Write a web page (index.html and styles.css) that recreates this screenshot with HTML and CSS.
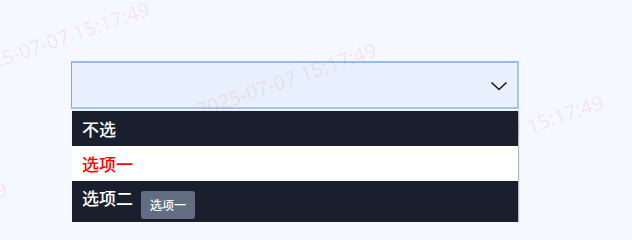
FILE: index.html
```html
<!DOCTYPE html>
<html lang="zh">
<head>
<meta charset="utf-8">
<link rel="stylesheet" href="styles.css">
</head>
<body>
<div class="page">
  <div class="select">
    <svg class="chevron" width="18" height="10" viewBox="0 0 18 10"><path d="M1.5 1.5 L9 8.5 L16.5 1.5" fill="none" stroke="#111827" stroke-width="1.6"/></svg>
  </div>
  <ul class="menu">
    <li class="opt dark">不选</li>
    <li class="opt light">选项一</li>
    <li class="opt dark last"><span>选项二</span><span class="tag">选项一</span></li>
  </ul>
  <div class="wm w1">2025-07-07 15:17:49</div>
  <div class="wm w2">2025-07-07 15:17:49</div>
  <div class="wm w3">2025-07-07 15:17:49</div>
  <div class="wm w4">2025-07-07 15:17:49</div>
</div>
</body>
</html>
```
FILE: styles.css
```css
html, body {
  margin: 0;
  padding: 0;
  background: #f5f8ff;
  height: 222px;
  overflow: hidden;
  font-family: "Noto Sans", "Noto Sans CJK SC", sans-serif;
}
.page {
  position: relative;
  box-sizing: border-box;
  padding: 61px 0 0 71px;
  height: 222px;
  overflow: hidden;
}
.select {
  box-sizing: border-box;
  width: 448px;
  height: 48px;
  background: #e7f0fc;
  border: 2px solid #a5c5ef;
  border-left: 1px solid #7ea8e2;
  border-top: 2px solid #97bbec;
  display: flex;
  align-items: center;
  justify-content: flex-end;
  padding-right: 9px;
}
.chevron { display: block; margin-top: 1px; }
.menu {
  position: relative;
  z-index: 2;
  list-style: none;
  margin: 2px 0 0 1px;
  padding: 0;
  width: 446px;
  box-shadow: 1px 0 1px rgba(0,0,0,0.25);
}
.opt {
  height: 35px;
  line-height: 35px;
  padding-left: 10px;
  font-size: 17px;
  font-weight: 500;
  font-family: "Noto Sans CJK SC", sans-serif;
}
.dark { background: #1a1f2d; color: #ffffff; }
.light { background: #ffffff; color: #ff0000; }
.last {
  display: flex;
  align-items: flex-start;
  height: 41px;
  line-height: 33px;
}
.tag {
  margin: 10px 0 0 8px;
  height: 28px;
  line-height: 27px;
  padding: 0 9px;
  font-size: 12px;
  font-weight: 500;
  background: #636d81;
  color: #ffffff;
  border-radius: 3px;
}
.wm {
  position: absolute;
  z-index: 1;
  font-size: 20px;
  line-height: 20px;
  white-space: nowrap;
  color: rgba(255, 0, 0, 0.09);
  transform-origin: 0 50%;
  transform: rotate(-19deg);
  pointer-events: none;
}
.w1 { left: -30px; top: 60px; }
.w2 { left: 197px; top: 101px; }
.w3 { left: 424px; top: 153px; }
.w4 { left: -172px; top: 240px; }
```
